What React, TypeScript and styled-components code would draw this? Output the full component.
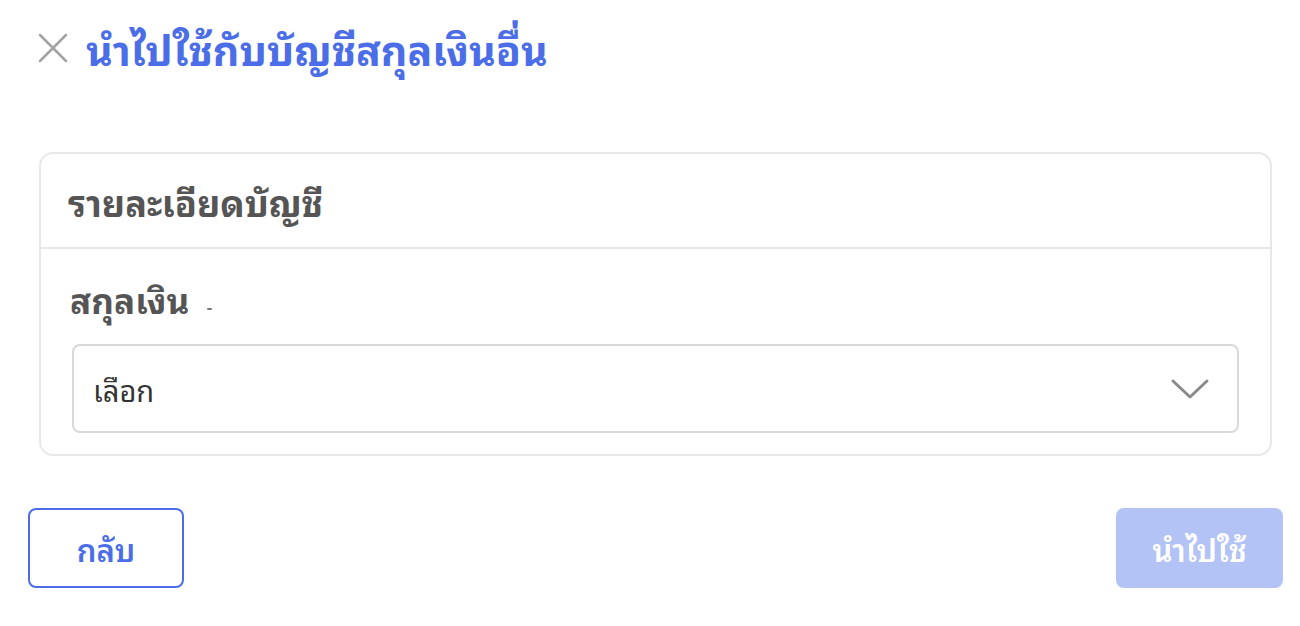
import styled, { createGlobalStyle } from 'styled-components'

const GlobalStyle = createGlobalStyle`
  body {
    margin: 0;
    background: #ffffff;
    font-family: "Noto Sans Thai Looped", "Sarabun", "Loma", "Garuda", "Tahoma", "Noto Sans Thai", "Noto Sans", sans-serif;
  }
`

const Page = styled.div`
  width: 1255px;
  padding: 24px 0 0 28px;
  box-sizing: content-box;
`

const Header = styled.div`
  display: flex;
  align-items: center;
  gap: 18px;
  padding-left: 10px;
  height: 48px;
`

const CloseButton = styled.button`
  display: flex;
  align-items: center;
  justify-content: center;
  width: 30px;
  height: 30px;
  padding: 0;
  border: none;
  background: none;
  cursor: pointer;
`

const Title = styled.h1`
  margin: 0;
  font-size: 41px;
  font-weight: 700;
  color: #4b6ee8;
  line-height: 48px;
`

const Card = styled.section`
  margin: 80px 11px 0 11px;
  border: 2px solid #e8e8e8;
  border-radius: 14px;
  overflow: hidden;
`

const CardHeader = styled.div`
  display: flex;
  align-items: center;
  height: 93px;
  padding: 0 27px;
  border-bottom: 2px solid #e8e8e8;
`

const CardTitle = styled.h2`
  margin: 0;
  font-size: 36px;
  font-weight: 700;
  color: #555555;
`

const CardBody = styled.div`
  padding: 29px 31px 21px 31px;
`

const Label = styled.label`
  display: flex;
  align-items: center;
  gap: 18px;
  margin-left: -2px;
  font-size: 35px;
  font-weight: 700;
  color: #555555;
  line-height: 40px;
`

const Mark = styled.span`
  width: 5px;
  height: 2px;
  margin-top: 22px;
  background: #777777;
  border-radius: 1px;
`

const Select = styled.div`
  display: flex;
  align-items: center;
  justify-content: space-between;
  height: 85px;
  margin-top: 26px;
  padding: 0 27px 0 19px;
  border: 2px solid #d9d9d9;
  border-radius: 8px;
`

const Placeholder = styled.span`
  font-size: 29px;
  color: #333333;
`

const Footer = styled.div`
  display: flex;
  justify-content: space-between;
  margin-top: 52px;
`

const Button = styled.button<{ $primary?: boolean }>`
  height: 80px;
  min-width: ${p => (p.$primary ? '167px' : '156px')};
  border-radius: 8px;
  font-family: inherit;
  font-size: 31px;
  font-weight: 600;
  cursor: pointer;
  border: 2px solid ${p => (p.$primary ? '#b3c3f5' : '#4b6ee8')};
  background: ${p => (p.$primary ? '#b3c3f5' : '#ffffff')};
  color: ${p => (p.$primary ? '#ffffff' : '#4b6ee8')};
`

function App() {
  return (
    <Page>
      <GlobalStyle />
      <Header>
        <CloseButton aria-label="close">
          <svg width="30" height="30" viewBox="0 0 30 30">
            <path d="M2 2 L28 28 M28 2 L2 28" stroke="#a3a3a3" strokeWidth="2.5" strokeLinecap="round" />
          </svg>
        </CloseButton>
        <Title>นำไปใช้กับบัญชีสกุลเงินอื่น</Title>
      </Header>
      <Card>
        <CardHeader>
          <CardTitle>รายละเอียดบัญชี</CardTitle>
        </CardHeader>
        <CardBody>
          <Label>
            สกุลเงิน
            <Mark />
          </Label>
          <Select>
            <Placeholder>เลือก</Placeholder>
            <svg width="40" height="24" viewBox="0 0 40 24">
              <path d="M3 4 L20 20 L37 4" fill="none" stroke="#8a8a8a" strokeWidth="3" strokeLinecap="round" strokeLinejoin="round" />
            </svg>
          </Select>
        </CardBody>
      </Card>
      <Footer>
        <Button>กลับ</Button>
        <Button $primary>นำไปใช้</Button>
      </Footer>
    </Page>
  )
}

export default App
